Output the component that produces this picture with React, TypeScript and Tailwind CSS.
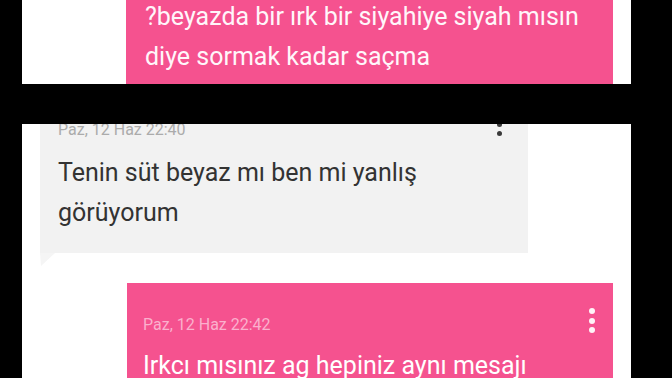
export default function App() {
  const font = { fontFamily: "Roboto, 'Noto Sans', sans-serif" };

  return (
    <div className="w-[672px] h-[378px] bg-black overflow-hidden" style={font}>
      <div className="ml-[22px] w-[609px] flex flex-col">
        {/* top: end of previous outgoing message */}
        <div className="h-[84px] bg-white overflow-hidden flex flex-col justify-end">
          <div className="ml-[104px] w-[487px] bg-[#f5528f] px-[19px] pb-[7px] text-[25px] leading-[40px] text-[#fff6fa]">
            <p>?beyazda bir ırk bir siyahiye siyah mısın</p>
            <p>diye sormak kadar saçma</p>
          </div>
        </div>

        {/* black band */}
        <div className="h-[40px]" />

        {/* bottom: conversation continues */}
        <div className="h-[254px] bg-white overflow-hidden">
          <div className="relative mt-[-36px] ml-[18px] w-[488px] bg-[#f2f2f2] pl-[18px] pr-[26px] pt-[25px] pb-[20px]">
            <div className="flex items-start justify-between">
              <span className="mt-[7px] text-[16px] leading-[20px] text-[#ababab]">Paz, 12 Haz 22:40</span>
              <div className="flex flex-col gap-[4px]">
                <span className="w-[5px] h-[5px] rounded-full bg-[#3a3a3a]" />
                <span className="w-[5px] h-[5px] rounded-full bg-[#3a3a3a]" />
                <span className="w-[5px] h-[5px] rounded-full bg-[#3a3a3a]" />
              </div>
            </div>
            <div className="mt-[13px] text-[25px] leading-[40px] text-[#333333]">
              <p>Tenin süt beyaz mı ben mi yanlış</p>
              <p>görüyorum</p>
            </div>
            <svg className="absolute left-0 top-full" width="16" height="14" viewBox="0 0 16 14">
              <polygon points="0,0 15,0 1,13" fill="#f5f5f5" />
            </svg>
          </div>

          <div className="mt-[30px] ml-[105px] w-[486px] bg-[#f5528f] pl-[16px] pr-[18px] pt-[25px]">
            <div className="flex items-start justify-between">
              <span className="mt-[7px] text-[16px] leading-[20px] text-[#fbb0cd]">Paz, 12 Haz 22:42</span>
              <div className="flex flex-col gap-[3.5px]">
                <span className="w-[6px] h-[6px] rounded-full bg-[#fff3f7]" />
                <span className="w-[6px] h-[6px] rounded-full bg-[#fff3f7]" />
                <span className="w-[6px] h-[6px] rounded-full bg-[#fff3f7]" />
              </div>
            </div>
            <div className="mt-[11px] text-[25px] leading-[40px] text-white">
              <p>Irkcı mısınız ag hepiniz aynı mesajı</p>
            </div>
          </div>
        </div>
      </div>
    </div>
  );
}
